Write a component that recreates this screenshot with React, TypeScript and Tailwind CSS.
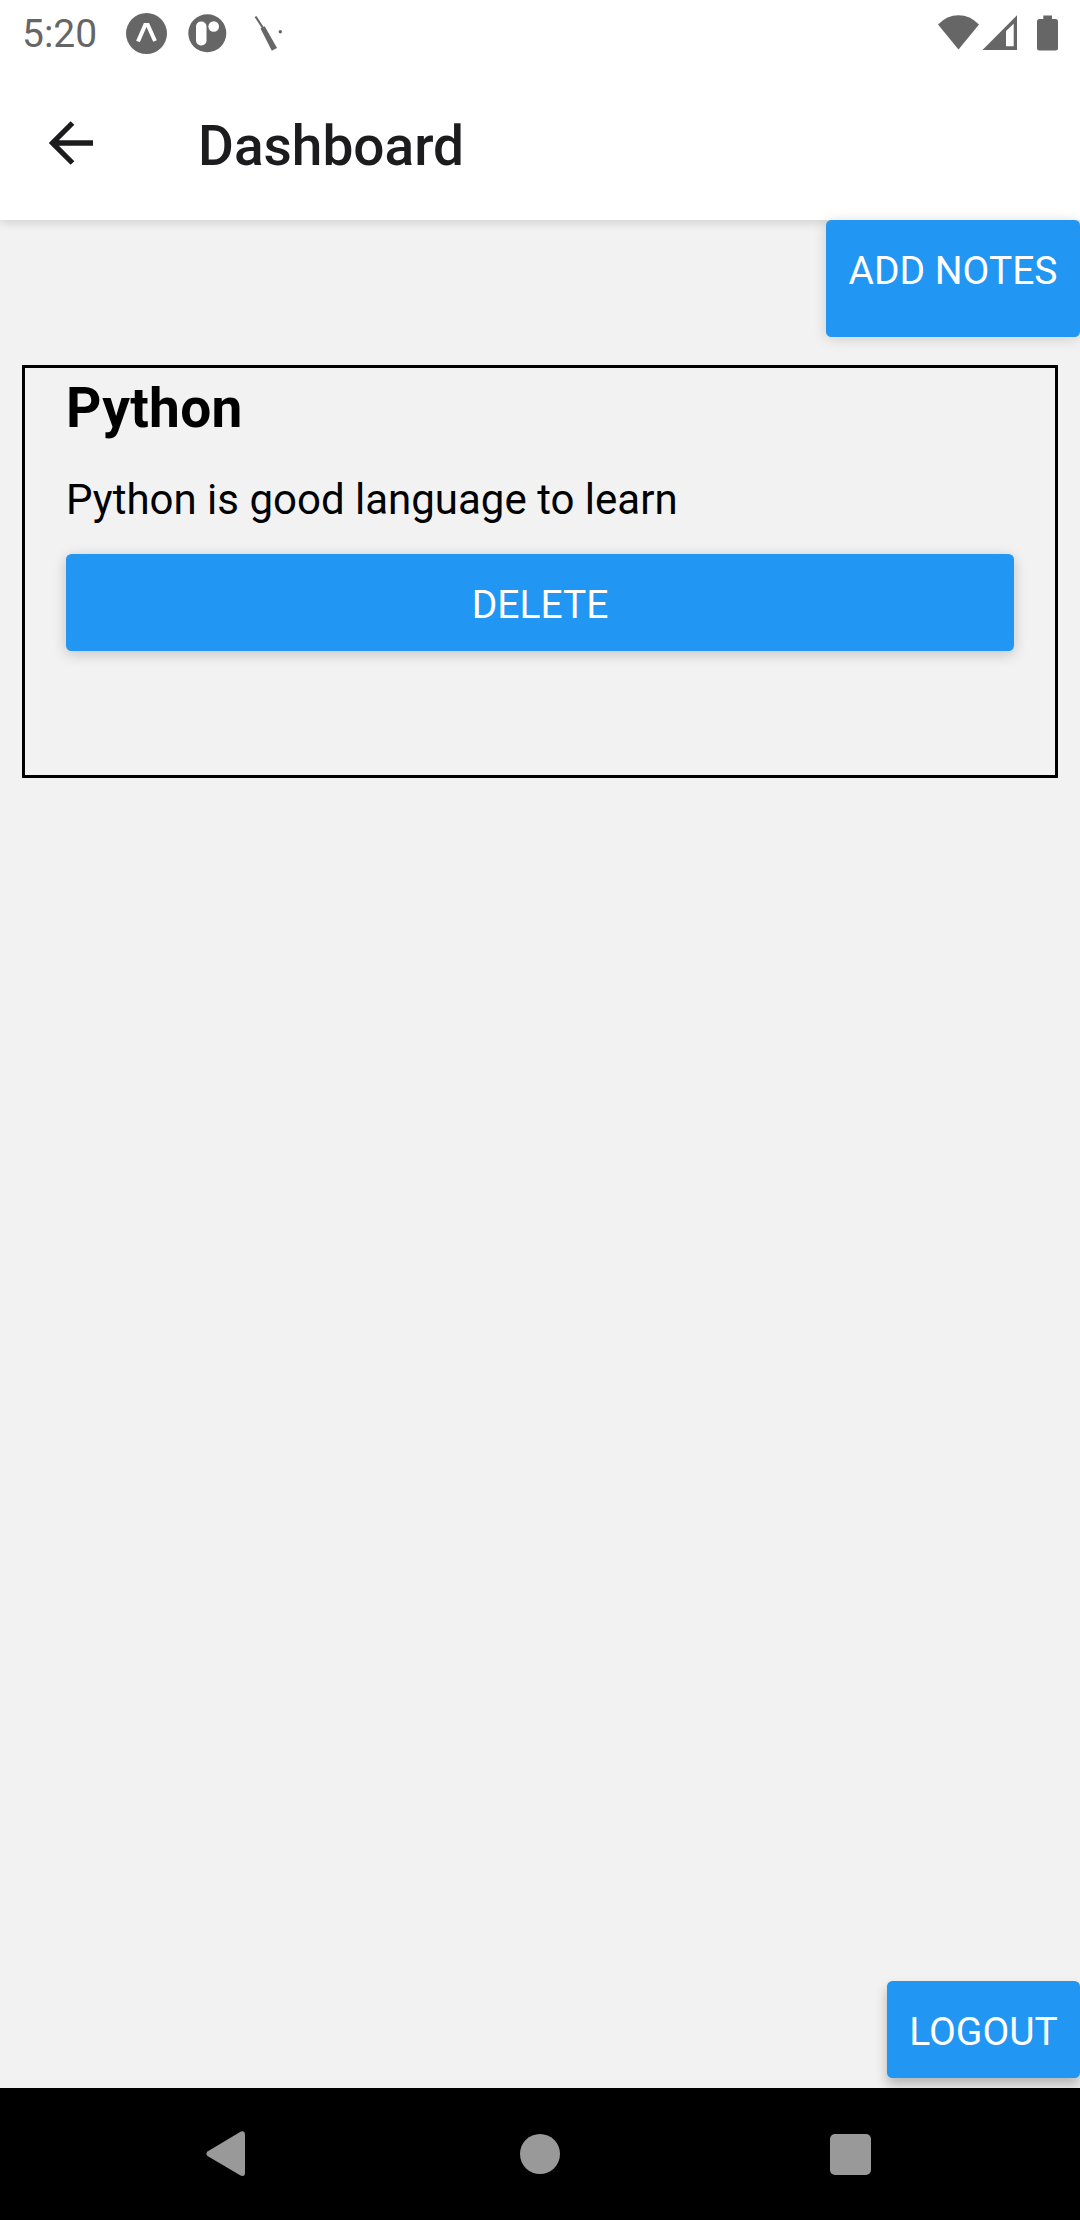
import type { ReactNode } from 'react';

function StatusBar() {
  return (
    <div className="relative z-10 flex h-[66px] items-start justify-between bg-white px-[22px] text-[#666666]">
      <div className="flex">
        <span className="w-[104px] text-[39px] leading-[69px] whitespace-nowrap">5:20</span>
        <svg className="h-[66px] w-[160px]" viewBox="126 0 160 66" fill="currentColor">
          <circle cx="146.5" cy="33.5" r="20.5" />
          <path d="M138 41.5L145.2 25H147.8L155 41" fill="none" stroke="#fff" strokeWidth="4" />
          <circle cx="207.3" cy="33.2" r="19" />
          <rect x="196" y="21.5" width="10.5" height="24" rx="5" fill="#fff" />
          <circle cx="213.7" cy="26.5" r="5.3" fill="#fff" />
          <path d="M255.5 16.5L263 28" stroke="currentColor" strokeWidth="2.2" fill="none" />
          <path d="M261 29.5L260.5 28.5L264.7 26.2L277 48L271.8 50.7Z" />
          <circle cx="280.3" cy="31.7" r="1.7" />
        </svg>
      </div>
      <svg className="h-[66px] w-[122px]" viewBox="936 0 122 66" fill="currentColor">
        <path d="M938 24.5Q947 15.3 958.5 15.3T979 24.5L958.5 49.5Z" />
        <path fillRule="evenodd" d="M982.5 50L1017 15.3V50ZM1006 31V46.3H1013.7V23.7Z" />
        <path d="M1043.3 15.5H1052V19H1055.5Q1058 19 1058 21.5V48Q1058 50.5 1055.5 50.5H1039.5Q1037 50.5 1037 48V21.5Q1037 19 1039.5 19H1043.3Z" />
      </svg>
    </div>
  );
}

function Header() {
  return (
    <header className="flex h-[154px] items-center bg-white pl-[49px] text-[#1c1c1e] shadow-[0_2px_10px_rgba(0,0,0,0.16)]">
      <svg className="h-[46px] w-[46px]" viewBox="0 0 46 46" fill="none" stroke="currentColor" strokeWidth="5.3">
        <path d="M44 23H4M23.5 3L3.5 23L23.5 43" />
      </svg>
      <h1 className="ml-[103px] pt-[6px] text-[55px] leading-[64px] font-medium">Dashboard</h1>
    </header>
  );
}

function Button({ children, className }: { children: ReactNode; className: string }) {
  return (
    <button className={`block rounded-[5.5px] bg-[#2196f3] text-center text-[39px] text-white ${className}`}>
      <span className="block h-[97px] leading-[102px] whitespace-nowrap">{children}</span>
    </button>
  );
}

export default function App() {
  return (
    <div className="flex h-[2220px] w-[1080px] flex-col overflow-hidden bg-[#f2f2f2] font-['Roboto',sans-serif]">
      <StatusBar />
      <Header />
      <main className="relative flex flex-1 flex-col">
        <Button className="w-[254px] self-end pb-[20px] shadow-[0_2px_14px_rgba(0,0,0,0.15)]">ADD NOTES</Button>
        <section className="mx-[22px] mt-[28px] h-[413px] border-3 border-black px-[41px] text-black">
          <h2 className="text-[55px] leading-[80px] font-bold tracking-[0.3px]">Python</h2>
          <p className="mt-[24px] text-[42px] leading-[55px]">Python is good language to learn</p>
          <Button className="mt-[27px] w-full shadow-[0_3px_14px_rgba(0,0,0,0.2)]">DELETE</Button>
        </section>
        <Button className="mt-auto mb-[10px] w-[193px] self-end shadow-[0_7px_12px_rgba(0,0,0,0.25)]">LOGOUT</Button>
      </main>
      <nav className="relative flex h-[132px] items-center bg-black text-[#999999]">
        <svg className="ml-[206px] h-[46px] w-[40px]" viewBox="0 0 40 46" fill="currentColor">
          <path d="M1.5 20.5L34.5 0.7Q39 -0.8 39 4V42Q39 46 34.5 44.5L1.5 25Q-0.7 22.7 1.5 20.5Z" />
        </svg>
        <span className="ml-[274px] h-[40px] w-[40px] rounded-full bg-[#999999]" />
        <span className="ml-[270px] h-[41px] w-[41px] rounded-[5px] bg-[#999999]" />
      </nav>
    </div>
  );
}
